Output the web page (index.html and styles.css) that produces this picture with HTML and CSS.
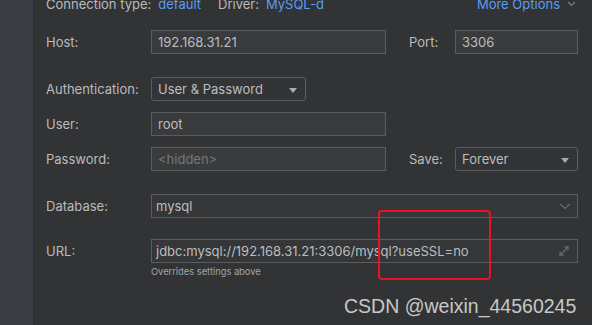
FILE: index.html
```html
<!DOCTYPE html>
<html>
<head>
<meta charset="utf-8">
<link rel="stylesheet" href="styles.css">
</head>
<body>
<div class="window">
  <aside class="sidebar"></aside>
  <main class="main">
    <div class="toprow">
      <span class="lbl">Connection type:</span><span class="link link-type">default</span>
      <span class="lbl driver">Driver:</span><span class="link link-driver">MySQL-d</span>
      <span class="spacer"></span>
      <span class="link">More Options</span>
      <svg class="more-chev" width="9" height="6" viewBox="0 0 9 6"><path d="M1 1 L4.5 4.5 L8 1" fill="none" stroke="#7d8082" stroke-width="1.2"/></svg>
    </div>

    <div class="row gap-host">
      <span class="label">Host:</span>
      <div class="field text w-host">192.168.31.21</div>
      <span class="label2">Port:</span>
      <div class="field text grow">3306</div>
    </div>

    <div class="row gap-lg">
      <span class="label">Authentication:</span>
      <div class="field combo w-auth">User &amp; Password<span class="tri"></span></div>
    </div>

    <div class="row gap-sm">
      <span class="label">User:</span>
      <div class="field text w-host">root</div>
    </div>

    <div class="row gap-sm">
      <span class="label">Password:</span>
      <div class="field text w-host placeholder">&lt;hidden&gt;</div>
      <span class="label2">Save:</span>
      <div class="field combo grow">Forever<span class="tri"></span></div>
    </div>

    <div class="row gap-lg">
      <span class="label">Database:</span>
      <div class="field db grow">mysql
        <svg class="db-chev" width="12" height="7" viewBox="0 0 12 7"><path d="M1 1 L6 5.5 L11 1" fill="none" stroke="#686b6d" stroke-width="1.3"/></svg>
      </div>
    </div>

    <div class="row gap-url">
      <span class="label">URL:</span>
      <div class="field db grow">jdbc:mysql://192.168.31.21:3306/mysql?useSSL=no
        <svg class="expand" width="12" height="12" viewBox="0 0 12 12"><g fill="none" stroke="#676a6c" stroke-width="1.3"><path d="M2 10 L10 2"/><path d="M6.5 2 L10 2 L10 5.5"/><path d="M2 6.5 L2 10 L5.5 10"/></g></svg>
      </div>
    </div>
    <div class="hint">Overrides settings above</div>
  </main>
  <div class="redbox"></div>
  <div class="watermark">CSDN @weixin_44560245</div>
</div>
</body>
</html>
```

FILE: styles.css
```css
html, body {
  margin: 0;
  padding: 0;
  background: #323334;
}
.window {
  position: relative;
  display: flex;
  width: 592px;
  height: 325px;
  overflow: hidden;
  font-family: Inter, "Noto Sans", sans-serif;
  font-size: 13px;
  color: #b9bbbd;
}
.sidebar {
  width: 33px;
  flex: none;
  background: #3a3d42;
  border-right: 1px solid #2c2e30;
}
.main {
  flex: 1;
  padding: 0 14px 0 12px;
  display: flex;
  flex-direction: column;
}
.toprow {
  display: flex;
  align-items: center;
  height: 16px;
  margin-top: -4px;
  white-space: nowrap;
}
.link { color: #589df6; }
.link-type { margin-left: 7px; }
.driver { margin-left: 17px; }
.link-driver { margin-left: 7px; }
.spacer { flex: 1; }
.more-chev { margin-left: 7px; margin-right: 2px; }

.row {
  display: flex;
  align-items: center;
  height: 24px;
}
.gap-host { margin-top: 18px; }
.gap-lg { margin-top: 23px; }
.gap-sm { margin-top: 11px; }
.gap-url { margin-top: 21px; }

.label {
  width: 105px;
  flex: none;
}
.label2 {
  width: 46px;
  margin-left: 23px;
  flex: none;
}
.field {
  box-sizing: border-box;
  height: 24px;
  border: 1px solid #5b5e60;
  padding: 0 6px;
  display: flex;
  align-items: center;
  white-space: nowrap;
  position: relative;
  color: #bcbec0;
}
.text { background: #393b3d; }
.placeholder { color: #75787a; }
.combo {
  background: #333435;
  border-radius: 3px;
}
.db { background: #343637; padding-left: 4px; }
.w-host { width: 235px; flex: none; }
.w-auth { width: 155px; flex: none; }
.grow { flex: 1; }
.tri {
  position: absolute;
  right: 8px;
  top: 10px;
  width: 0;
  height: 0;
  border-left: 4px solid transparent;
  border-right: 4px solid transparent;
  border-top: 5px solid #a9abad;
}
.db-chev { position: absolute; right: 6px; top: 8px; }
.expand { position: absolute; right: 7px; top: 5px; }
.hint {
  margin-top: 3px;
  margin-left: 105px;
  font-size: 9.3px;
  color: #a3a5a7;
}
.redbox {
  position: absolute;
  left: 378px;
  top: 210px;
  width: 109px;
  height: 66px;
  border: 2px solid #ee1026;
  border-radius: 4px;
}
.watermark {
  position: absolute;
  left: 344px;
  top: 295px;
  font-family: "Liberation Sans", Arial, sans-serif;
  font-size: 19.5px;
  color: rgba(235, 235, 235, 0.82);
  white-space: nowrap;
}
```
